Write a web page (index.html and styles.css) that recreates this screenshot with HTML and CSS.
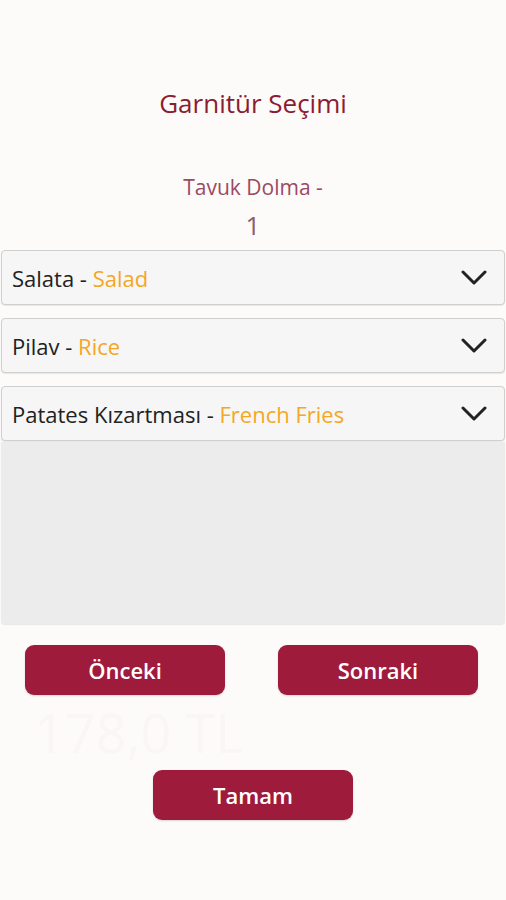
FILE: index.html
```html
<!DOCTYPE html>
<html lang="tr">

<head>
    <meta charset="UTF-8">
    <meta name="viewport" content="width=device-width, initial-scale=1.0">
    <title>Garnitür Seçimi</title>
    <link rel="stylesheet" href="styles.css">
</head>

<body>
    <div class="dialog">
        <h2 class="title">Garnitür Seçimi</h2>

        <div class="product">
            <div class="product-name">Tavuk Dolma -</div>
            <div class="product-count">1</div>
        </div>

        <!-- Garnitür listesi -->
        <div class="options">
            <div class="option">
                <span class="option-text">Salata - <span class="en">Salad</span></span>
                <svg class="chevron" width="28" height="16" viewBox="0 0 28 16">
                    <path d="M3 2 L14 13 L25 2" fill="none" stroke="#222" stroke-width="3" stroke-linecap="round" stroke-linejoin="round" />
                </svg>
            </div>
            <div class="option">
                <span class="option-text">Pilav - <span class="en">Rice</span></span>
                <svg class="chevron" width="28" height="16" viewBox="0 0 28 16">
                    <path d="M3 2 L14 13 L25 2" fill="none" stroke="#222" stroke-width="3" stroke-linecap="round" stroke-linejoin="round" />
                </svg>
            </div>
            <div class="option">
                <span class="option-text">Patates Kızartması - <span class="en">French Fries</span></span>
                <svg class="chevron" width="28" height="16" viewBox="0 0 28 16">
                    <path d="M3 2 L14 13 L25 2" fill="none" stroke="#222" stroke-width="3" stroke-linecap="round" stroke-linejoin="round" />
                </svg>
            </div>
            <div class="empty-area"></div>
        </div>

        <div class="nav-buttons">
            <button class="btn">Önceki</button>
            <button class="btn">Sonraki</button>
        </div>

        <div class="ghost-price">178,0 TL</div>

        <div class="done-row">
            <button class="btn">Tamam</button>
        </div>
    </div>
</body>

</html>
```

FILE: styles.css
```css
/* Genel */

body {
    font-family: 'Open Sans', 'Noto Sans', sans-serif;
    margin: 0;
    padding: 0;
    background-color: #fdfafa;
    min-height: 100vh;
}

.dialog {
    padding-top: 86px;
}

.title {
    margin: 0;
    text-align: center;
    font-size: 26px;
    line-height: 34px;
    font-weight: 400;
    color: #8c1c2f;
}

.product {
    margin-top: 48px;
    text-align: center;
    color: #9a4a62;
}

.product-name {
    font-size: 21px;
    line-height: 38px;
}

.product-count {
    font-size: 26px;
    line-height: 38px;
    color: #8f5a6a;
}

/* Liste */

.options {
    margin: 6px 1px 0;
    display: flex;
    flex-direction: column;
}

.option {
    height: 53px;
    display: flex;
    align-items: center;
    justify-content: space-between;
    padding: 0 16px 0 10px;
    background-color: #f6f6f6;
    border: 1px solid #cfcfcf;
    border-radius: 4px;
    margin-bottom: 13px;
    box-shadow: 0 1px 1px rgba(0, 0, 0, 0.08);
}

.option:nth-child(3) {
    margin-bottom: 1px;
}

.option-text {
    font-size: 22px;
    color: #222;
}

.en {
    color: #f5a623;
}

.empty-area {
    height: 182px;
    background-color: #ececec;
    border-radius: 0 0 4px 4px;
    box-shadow: 0 1px 1px rgba(0, 0, 0, 0.08);
}

/* Butonlar */

.btn {
    width: 200px;
    height: 50px;
    border: none;
    border-radius: 9px;
    background-color: #9e1b3c;
    color: #fff;
    font-family: 'Open Sans', 'Noto Sans', sans-serif;
    font-size: 22px;
    font-weight: 600;
    box-shadow: 0 1px 2px rgba(0, 0, 0, 0.15);
}

.nav-buttons {
    margin-top: 21px;
    display: flex;
    justify-content: space-between;
    padding: 0 28px 0 25px;
}

.ghost-price {
    height: 75px;
    padding-left: 34px;
    font-size: 54px;
    line-height: 75px;
    color: #faf6f6;
}

.done-row {
    display: flex;
    justify-content: center;
}
```
